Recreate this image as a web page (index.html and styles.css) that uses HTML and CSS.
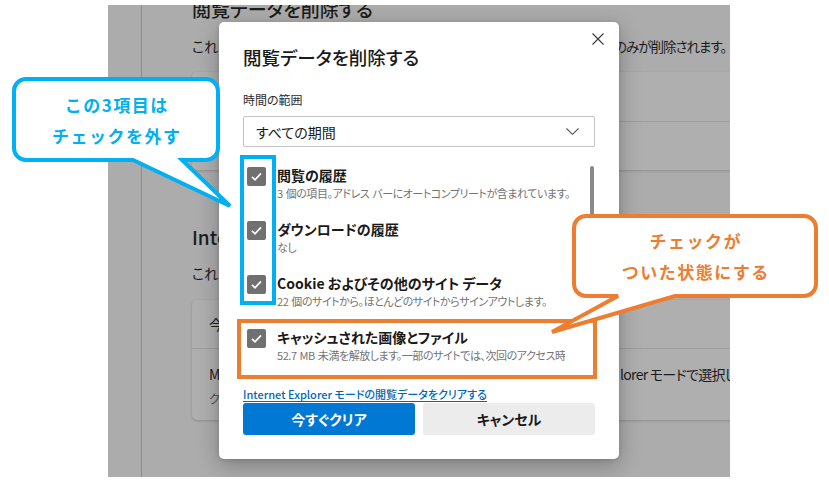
FILE: index.html
```html
<!DOCTYPE html>
<html lang="ja">
<head>
<meta charset="utf-8">
<title>閲覧データを削除する</title>
<link rel="stylesheet" href="styles.css">
</head>
<body>
<div class="stage">
  <div class="screen">
    <div class="sidebar"></div>
    <div class="content">
      <h2 class="bg-h">閲覧データを削除する</h2>
      <p class="bg-p"><span class="cut cut-1">これにより、このデバイス上のこのプロファイルのデータ</span><span class="tight t1">のみが削除されます。</span></p>
      <div class="bg-card card-1">
        <div class="bg-row r49"></div>
        <div class="bg-row r49"></div>
      </div>
      <h2 class="bg-h h2">Internet Explorer の閲覧データをクリアする</h2>
      <p class="bg-p p2">これには、Internet Explorer の履歴とデータが含まれます。</p>
      <div class="bg-card card-2">
        <div class="bg-row r48"><span>今すぐ閲覧データをクリア</span></div>
        <div class="bg-row r72">
          <div class="line1"><span class="cut cut-2">Microsoft Edge を閉じるたびに Internet Exp</span><span class="tight">lorer モードで選択したデータをクリアする</span></div>
          <div class="line2">クリアするデータを選択</div>
        </div>
      </div>
    </div>

    <div class="dialog">
      <button class="close" aria-label="閉じる">
        <svg width="12" height="12" viewBox="0 0 12 12"><path d="M0.5 0.5 L11.5 11.5 M11.5 0.5 L0.5 11.5" stroke="#3a3a3a" stroke-width="1.1" fill="none"/></svg>
      </button>
      <h1 class="title">閲覧データを削除する</h1>
      <div class="label">時間の範囲</div>
      <div class="select">
        <span>すべての期間</span>
        <svg width="13" height="7" viewBox="0 0 13 7"><path d="M0.5 0.5 L6.5 6.3 L12.5 0.5" stroke="#555" stroke-width="1.1" fill="none"/></svg>
      </div>
      <div class="list">
        <div class="item">
          <span class="cb"><svg width="19" height="19" viewBox="0 0 19 19"><path d="M5 9.8 L8 12.8 L14 6.3" stroke="#fff" stroke-width="1.7" fill="none"/></svg></span>
          <div class="txt"><div class="it">閲覧の履歴</div><div class="id">3 個の項目。アドレス バーにオートコンプリートが含まれています。</div></div>
        </div>
        <div class="item">
          <span class="cb"><svg width="19" height="19" viewBox="0 0 19 19"><path d="M5 9.8 L8 12.8 L14 6.3" stroke="#fff" stroke-width="1.7" fill="none"/></svg></span>
          <div class="txt"><div class="it">ダウンロードの履歴</div><div class="id">なし</div></div>
        </div>
        <div class="item">
          <span class="cb"><svg width="19" height="19" viewBox="0 0 19 19"><path d="M5 9.8 L8 12.8 L14 6.3" stroke="#fff" stroke-width="1.7" fill="none"/></svg></span>
          <div class="txt"><div class="it">Cookie およびその他のサイト データ</div><div class="id">22 個のサイトから。ほとんどのサイトからサインアウトします。</div></div>
        </div>
        <div class="item">
          <span class="cb"><svg width="19" height="19" viewBox="0 0 19 19"><path d="M5 9.8 L8 12.8 L14 6.3" stroke="#fff" stroke-width="1.7" fill="none"/></svg></span>
          <div class="txt"><div class="it">キャッシュされた画像とファイル</div><div class="id">52.7 MB 未満を解放します。一部のサイトでは、次回のアクセス時</div></div>
        </div>
        <div class="thumb"></div>
      </div>
      <a class="link" href="#">Internet Explorer モードの閲覧データをクリアする</a>
      <div class="buttons">
        <button class="btn primary">今すぐクリア</button>
        <button class="btn secondary">キャンセル</button>
      </div>
    </div>
  </div>

  <div class="hl hl-blue"></div>
  <div class="hl hl-orange"></div>

  <div class="callout callout-blue">
    <svg width="208" height="85" viewBox="0 0 208 85">
      <path d="M14 2 H194 A12 12 0 0 1 206 14 V71 A12 12 0 0 1 194 83 H170 L218 129 L121 83 H14 A12 12 0 0 1 2 71 V14 A12 12 0 0 1 14 2 Z" fill="#fff" stroke="#00b0f0" stroke-width="4" stroke-linejoin="miter"/>
    </svg>
    <span>この3項目は</span>
    <span>チェックを外す</span>
  </div>

  <div class="callout callout-orange">
    <svg width="246" height="84" viewBox="0 0 246 84">
      <path d="M14 2 H232 A12 12 0 0 1 244 14 V70 A12 12 0 0 1 232 82 H103 L-20 118 L46 82 H14 A12 12 0 0 1 2 70 V14 A12 12 0 0 1 14 2 Z" fill="#fff" stroke="#ed7d31" stroke-width="4" stroke-linejoin="miter"/>
    </svg>
    <span>チェックが</span>
    <span>ついた状態にする</span>
  </div>
</div>
</body>
</html>
```

FILE: styles.css
```css
* { box-sizing: border-box; }

html, body {
  margin: 0;
  padding: 0;
  background: #fff;
}

body {
  font-family: "Noto Sans CJK JP", "Noto Sans", sans-serif;
  font-feature-settings: "palt";
  color: #1a1a1a;
}

.stage {
  position: relative;
  width: 829px;
  height: 485px;
  overflow: hidden;
}

/* dimmed settings page behind the dialog */
.screen {
  position: relative;
  margin: 5px 0 0 108px;
  width: 622px;
  height: 472px;
  background: #acacac;
  display: flex;
  overflow: hidden;
}

.sidebar {
  flex: none;
  width: 34px;
  border-right: 1px solid #8c8c8c;
}

.content {
  flex: 1;
  min-width: 0;
  padding-left: 50px;
  white-space: nowrap;
}

.bg-h {
  margin: -9px 0 0;
  font-size: 19px;
  line-height: 26px;
  font-weight: 500;
  color: #1c1c1c;
}

.bg-h.h2 { margin-top: 54px; }

.bg-p {
  margin: 14px 0 0;
  font-size: 14px;
  line-height: 20px;
  color: #1c1c1c;
  display: flex;
  align-items: baseline;
}

.bg-p.p2 { margin-top: 13px; }

.cut {
  display: inline-block;
  overflow: hidden;
  flex: none;
}

.cut-1 { width: 422px; }
.cut-2 { width: 411px; }

.tight { letter-spacing: -0.7px; }
.t1 { font-size: 13.5px; letter-spacing: -1px; }

.bg-card {
  margin-right: -20px;
  background: #afafaf;
  border-radius: 5px;
  box-shadow: 0 1px 3px rgba(0, 0, 0, 0.18);
}

.card-1 { margin-top: 16px; }
.card-2 { margin-top: 17px; }

.bg-row + .bg-row { border-top: 1px solid #9d9d9d; }
.r49 { height: 49px; }

.r48 {
  height: 48px;
  display: flex;
  align-items: center;
  padding-left: 17px;
  font-size: 14px;
  color: #1c1c1c;
}

.r72 {
  height: 72px;
  padding: 15px 0 0 17px;
}

.line1 {
  display: flex;
  font-size: 14px;
  line-height: 20px;
  color: #1c1c1c;
}

.line2 {
  margin-top: 5px;
  font-size: 12px;
  line-height: 20px;
  color: #505050;
}

/* dialog */
.dialog {
  position: absolute;
  left: 111px;
  top: 17px;
  width: 400px;
  height: 437px;
  background: #fff;
  border-radius: 5px;
  box-shadow: 0 6px 22px rgba(0, 0, 0, 0.28), 0 1px 4px rgba(0, 0, 0, 0.12);
  padding: 22px 24px 24px;
  display: flex;
  flex-direction: column;
}

.close {
  position: absolute;
  top: 11px;
  right: 15px;
  width: 12px;
  height: 12px;
  padding: 0;
  border: 0;
  background: none;
  display: flex;
}

.title {
  margin: 0;
  font-size: 18.5px;
  line-height: 26px;
  font-weight: 500;
  color: #1a1a1a;
}

.label {
  margin-top: 22px;
  font-size: 12px;
  line-height: 16px;
  color: #2b2b2b;
}

.select {
  margin-top: 8px;
  height: 31px;
  border: 1px solid #c4c4c4;
  border-radius: 2px;
  padding: 0 15px 0 12px;
  display: flex;
  align-items: center;
  justify-content: space-between;
  font-size: 14px;
  color: #1a1a1a;
}

.list {
  position: relative;
  margin-top: 18px;
  height: 210px;
  overflow: hidden;
  display: flex;
  flex-direction: column;
  gap: 17px;
}

.item {
  display: flex;
  align-items: flex-start;
  gap: 11px;
  padding-left: 4px;
  padding-right: 6px;
  height: 37px;
}

.cb {
  flex: none;
  width: 19px;
  height: 19px;
  margin-top: 2px;
  border-radius: 2px;
  background: #707070;
  display: flex;
}

.txt {
  min-width: 0;
  white-space: nowrap;
  overflow: hidden;
}

.it {
  font-size: 14px;
  line-height: 20px;
  font-weight: 600;
  color: #1a1a1a;
}

.id {
  font-size: 11px;
  line-height: 17px;
  letter-spacing: -0.45px;
  word-spacing: 1px;
  color: #737373;
}

.thumb {
  position: absolute;
  right: 1px;
  top: 1px;
  width: 4px;
  height: 100px;
  border-radius: 2px;
  background: #8a8a8a;
}

.link {
  align-self: flex-start;
  margin-top: 11px;
  font-size: 11px;
  line-height: 17px;
  font-weight: 500;
  color: #0067b8;
  text-decoration: underline;
  text-underline-offset: 2px;
}

.buttons {
  display: flex;
  gap: 8px;
}

.btn {
  flex: 1;
  height: 32px;
  border: 0;
  border-radius: 3px;
  font-family: inherit;
  font-feature-settings: "palt";
  font-size: 14px;
  font-weight: 600;
}

.primary { background: #0078d4; color: #fff; }
.secondary { background: #ececec; color: #1a1a1a; }

/* annotations */
.hl {
  position: absolute;
  border-style: solid;
  border-width: 4px;
}

.hl-blue {
  left: 240px;
  top: 155px;
  width: 36px;
  height: 150px;
  border-color: #00b0f0;
}

.hl-orange {
  left: 237px;
  top: 319px;
  width: 360px;
  height: 60px;
  border-color: #ed7d31;
}

.callout {
  position: absolute;
  display: flex;
  flex-direction: column;
  align-items: center;
  justify-content: center;
  font-feature-settings: normal;
  font-size: 17px;
  line-height: 31px;
  font-weight: 700;
  letter-spacing: 1.5px;
}

.callout svg {
  position: absolute;
  left: 0;
  top: 0;
  overflow: visible;
}

.callout span {
  position: relative;
  margin-right: -1.5px;
}

.callout-blue {
  left: 12px;
  top: 77px;
  width: 208px;
  height: 85px;
  color: #00b0f0;
}

.callout-orange {
  left: 572px;
  top: 214px;
  width: 246px;
  height: 84px;
  color: #ed7d31;
}
```
